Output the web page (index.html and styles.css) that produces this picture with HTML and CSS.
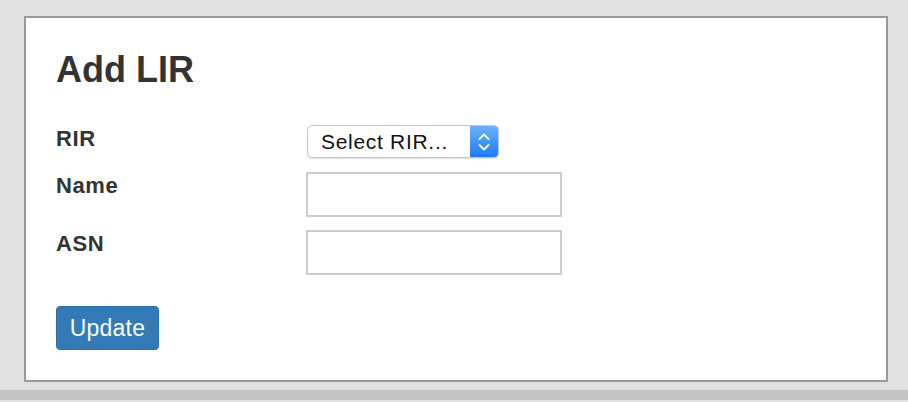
FILE: index.html
```html
<!DOCTYPE html>
<html>
<head>
<meta charset="utf-8">
<link rel="stylesheet" href="styles.css">
</head>
<body>
<div class="page">
  <div class="card">
    <h1 class="title">Add LIR</h1>
    <form class="form">
      <div class="row row-select">
        <label class="label">RIR</label>
        <div class="select" role="listbox">
          <span class="select-text">Select RIR...</span>
          <span class="select-arrows">
            <svg width="14" height="22" viewBox="0 0 14 22"><path d="M2.5 8 L7 3.5 L11.5 8 M2.5 14 L7 18.5 L11.5 14" fill="none" stroke="#fff" stroke-width="1.8" stroke-linecap="round" stroke-linejoin="round"/></svg>
          </span>
        </div>
      </div>
      <div class="row">
        <label class="label">Name</label>
        <input class="input" type="text">
      </div>
      <div class="row">
        <label class="label">ASN</label>
        <input class="input" type="text">
      </div>
      <button class="btn" type="button">Update</button>
    </form>
  </div>
  <div class="bar"></div>
</div>
</body>
</html>
```
FILE: styles.css
```css
html, body {
  margin: 0;
  padding: 0;
  background: #e0e1e0;
  font-family: "Liberation Sans", Arial, sans-serif;
}
.page {
  padding: 16px 20px 0 24px;
  height: 402px;
  box-sizing: border-box;
}
.card {
  background: #fff;
  border: 2px solid #999;
  height: 366px;
  box-sizing: border-box;
  padding: 32px 30px 0 30px;
}
.title {
  margin: 0;
  font-size: 36px;
  line-height: 40px;
  font-weight: bold;
  color: #333;
}
.form {
  display: flex;
  flex-direction: column;
  align-items: flex-start;
  margin-top: 35px;
}
.row {
  display: flex;
  align-items: flex-start;
  margin-bottom: 13px;
}
.row-select {
  margin-bottom: 14px;
}
.label {
  width: 250px;
  font-size: 22px;
  line-height: 24px;
  font-weight: bold;
  color: #333;
  padding-top: 2px;
  letter-spacing: 0.6px;
}
.select {
  margin-left: 1px;
  width: 192px;
  height: 33px;
  box-sizing: border-box;
  border: 1px solid #c6c6c6;
  border-radius: 5px;
  box-shadow: 0 1px 1px rgba(0,0,0,0.12);
  display: flex;
  overflow: hidden;
  background: #fff;
}
.select-text {
  flex: 1;
  padding-left: 13px;
  font-size: 21px;
  line-height: 31px;
  color: #111;
  letter-spacing: 0.7px;
}
.select-arrows {
  width: 28px;
  background: linear-gradient(#6db2fb, #1a7cf8);
  display: flex;
  align-items: center;
  justify-content: center;
}
.input {
  width: 256px;
  height: 45px;
  box-sizing: border-box;
  border: 2px solid #ccc;
  margin: 0;
  padding: 0 8px;
  font-family: inherit;
  font-size: 18px;
  background: #fff;
  outline: none;
}
.btn {
  margin-top: 18px;
  width: 103px;
  height: 44px;
  box-sizing: border-box;
  background: #337ab7;
  border: 1px solid #2e6da4;
  border-radius: 4px;
  color: #fff;
  font-family: inherit;
  font-size: 23px;
  padding: 0;
  letter-spacing: 0.2px;
}
.bar {
  margin: 8px -20px 0 -24px;
  height: 10px;
  background: #c4c4c4;
}
```
